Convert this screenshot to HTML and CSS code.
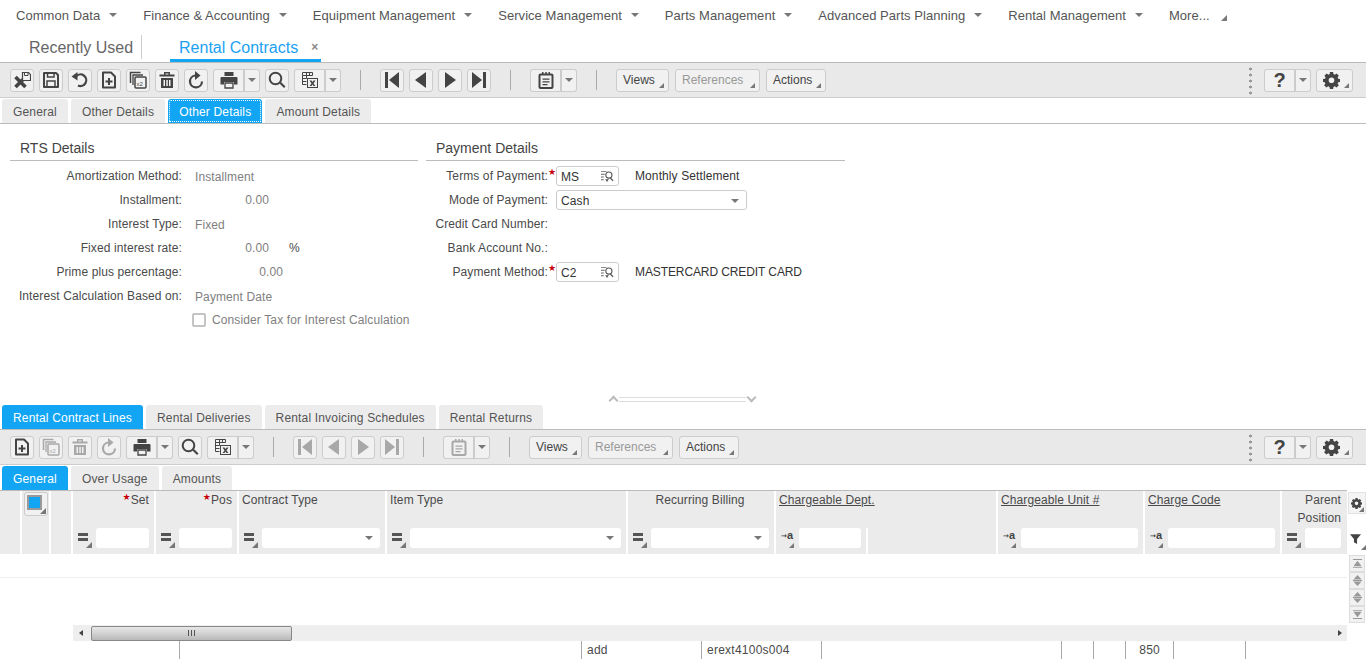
FILE: index.html
```html
<!DOCTYPE html>
<html lang="en">
<head>
    <meta charset="UTF-8">
    <meta name="viewport" content="width=device-width, initial-scale=1.0">
    <title>Rental Contracts</title>
    <link rel="stylesheet" href="styles.css">
</head>
<body>

    <!-- icon set, used by both toolbars -->
    <svg class="icon-defs" xmlns="http://www.w3.org/2000/svg">
        <symbol id="i-saveclose" viewBox="0 0 18 18">
            <path d="M2.500 6l10 10M12.500 6l-10 10" fill="none" stroke="currentColor" stroke-width="3.600"/>
            <path d="M9.500 1.500h6l2 2v6h-8z" fill="#f1f1f1" stroke="currentColor" stroke-width="1.200"/>
            <path d="M11.500 1.500h3.500v3h-3.500z" fill="none" stroke="currentColor"/>
        </symbol>
        <symbol id="i-save" viewBox="0 0 18 18">
            <path d="M2 2h12l2 2v12H2z" fill="none" stroke="currentColor" stroke-width="2" stroke-linejoin="round"/>
            <path d="M5.500 2v4h6.500V2M5 16v-6h8v6" fill="none" stroke="currentColor" stroke-width="1.500"/>
        </symbol>
        <symbol id="i-undo" viewBox="0 0 18 18">
            <path d="M5 5.500a5.800 5.800 0 1 1 2 9" fill="none" stroke="currentColor" stroke-width="2.200"/>
            <path d="M0.500 5.500l6-4.500v8.500z" fill="currentColor"/>
        </symbol>
        <symbol id="i-new" viewBox="0 0 18 18">
            <path d="M3 1.500h8l4 4v11H3z" fill="none" stroke="currentColor" stroke-width="2" stroke-linejoin="round"/>
            <path d="M8 7h2v2.500h2.500v2H10V14H8v-2.500H5.500v-2H8z" fill="currentColor"/>
        </symbol>
        <symbol id="i-copy" viewBox="0 0 18 18">
            <path d="M1.500 12V1.500h10" fill="none" stroke="currentColor" stroke-width="1.500"/>
            <path d="M4 14V4h10" fill="none" stroke="currentColor" stroke-width="1.300"/>
            <rect x="6" y="6" width="11" height="11" rx="1" fill="none" stroke="currentColor" stroke-width="1.500"/>
            <text x="7.600" y="14.500" class="icon-x2">x2</text>
        </symbol>
        <symbol id="i-delete" viewBox="0 0 18 18">
            <path d="M1.500 3.500h15v2h-15zM6 3.500V1h6v2.500h-1.500V2.500h-3v1z" fill="currentColor"/>
            <path d="M3 7h12v10H3zM5.500 9v6h1.500V9zM8.300 9v6h1.500V9zM11 9v6h1.500V9z" fill="currentColor" fill-rule="evenodd"/>
        </symbol>
        <symbol id="i-refresh" viewBox="0 0 18 18">
            <path d="M8 4.500a6 6 0 1 0 7 6" fill="none" stroke="currentColor" stroke-width="2.200"/>
            <path d="M8 0l5.500 4.500L8 9z" fill="currentColor"/>
        </symbol>
        <symbol id="i-print" viewBox="0 0 18 18">
            <path d="M4.500 1h9v4h-9zM1.500 6h15a1 1 0 0 1 1 1v6.500h-3.500V11H4v2.500H.5V7a1 1 0 0 1 1-1z" fill="currentColor"/>
            <path d="M5 12h8v5H5z" fill="#f1f1f1" stroke="currentColor" stroke-width="1.300"/>
        </symbol>
        <symbol id="i-search" viewBox="0 0 18 18">
            <circle cx="7.500" cy="7.500" r="5.800" fill="none" stroke="currentColor" stroke-width="2"/>
            <path d="M11.500 12.500l1.500-1.500 4.500 4.500-1.500 1.500z" fill="currentColor"/>
        </symbol>
        <symbol id="i-excel" viewBox="0 0 18 18">
            <path d="M1.500 1.500h10v3h-10zM1.500 4.500v9h4M1.500 7.500h4M1.500 10.500h4M5.500 1.500v6M8.500 1.500v3" fill="none" stroke="currentColor"/>
            <rect x="6.500" y="7.500" width="10" height="9" fill="#f1f1f1" stroke="currentColor"/>
            <path d="M8.500 9.500h2l1 1.500 1-1.500h2l-2 3 2 2.500h-2l-1-1.500-1 1.500h-2l2-2.500z" fill="currentColor"/>
        </symbol>
        <symbol id="i-first" viewBox="0 0 18 18"><path d="M2 1h3v16H2zM16 1v16L6 9z" fill="currentColor"/></symbol>
        <symbol id="i-prev" viewBox="0 0 18 18"><path d="M14 1v16L3 9z" fill="currentColor"/></symbol>
        <symbol id="i-next" viewBox="0 0 18 18"><path d="M4 1v16l11-8z" fill="currentColor"/></symbol>
        <symbol id="i-last" viewBox="0 0 18 18"><path d="M13 1h3v16h-3zM2 1v16l10-8z" fill="currentColor"/></symbol>
        <symbol id="i-note" viewBox="0 0 18 18">
            <path d="M3.500 3.500h11a1 1 0 0 1 1 1V16a1 1 0 0 1-1 1h-11a1 1 0 0 1-1-1V4.500a1 1 0 0 1 1-1z" fill="none" stroke="currentColor" stroke-width="2"/>
            <path d="M5 1h1.500v3H5zM8.300 1h1.500v3H8.300zM11.500 1H13v3h-1.500zM5.500 7.500h7v1.300h-7zM5.500 10.300h7v1.300h-7zM5.500 13h5v1.300h-5z" fill="currentColor"/>
        </symbol>
        <symbol id="i-gear" viewBox="0 0 18 18">
            <path fill="currentColor" fill-rule="evenodd" d="M7.300 1h3.400l.4 2.200 1.400.6L14.400 2.500l2.400 2.400-1.300 1.800.6 1.400 2.200.4v3l-2.200.4-.6 1.400 1.300 1.800-2.400 2.400-1.900-1.300-1.400.6-.4 2.100H7.300l-.4-2.100-1.400-.6-1.900 1.300-2.400-2.400 1.300-1.800-.6-1.400L0 11.500v-3l2.200-.4.6-1.400-1.300-1.800 2.400-2.400 1.900 1.300 1.400-.6zM9 6.700a3 3 0 1 0 0 6 3 3 0 0 0 0-6z" transform="translate(0 -1)"/>
        </symbol>
        <symbol id="i-lookup" viewBox="0 0 14 14">
            <path d="M0 1h6v1H0zM0 4h4v1H0zM0 7h3v1H0zM0 10h3v1H0z" fill="#666"/>
            <circle cx="8.500" cy="5.500" r="3.300" fill="none" stroke="#555" stroke-width="1.200"/>
            <path d="M10.500 8l3 3-1 1-3-3zM4.500 10h4l-2 3z" fill="#555"/>
        </symbol>
        <symbol id="i-filter" viewBox="0 0 14 14"><path d="M0 1h14L9 7v6.500L5 11V7z" fill="currentColor"/></symbol>
        <symbol id="i-top" viewBox="0 0 12 12"><path d="M1 1h10v1.200H1zM6 3l4.500 6h-9zM1 10h10v1H1z" fill="#999"/></symbol>
        <symbol id="i-up" viewBox="0 0 12 12"><path d="M6 0l4.500 5h-9zM1 5.500h10v1H1zM1.500 7h9L6 12z" fill="#999"/></symbol>
        <symbol id="i-bottom" viewBox="0 0 12 12"><path d="M1 1h10v1H1zM1.500 3h9L6 9zM1 9.800h10V11H1z" fill="#999"/></symbol>
    </svg>

    <div class="menubar">
        <a class="menu-item">Common Data<i class="caret"></i></a>
        <a class="menu-item">Finance &amp; Accounting<i class="caret"></i></a>
        <a class="menu-item">Equipment Management<i class="caret"></i></a>
        <a class="menu-item">Service Management<i class="caret"></i></a>
        <a class="menu-item">Parts Management<i class="caret"></i></a>
        <a class="menu-item">Advanced Parts Planning<i class="caret"></i></a>
        <a class="menu-item">Rental Management<i class="caret"></i></a>
        <a class="menu-item menu-more">More...<i class="corner"></i></a>
    </div>

    <div class="pagetabs">
        <a class="pagetab-recent">Recently Used</a>
        <a class="pagetab-current">Rental Contracts<span class="pagetab-close">×</span></a>
    </div>

    <div class="toolbar">
        <button class="tool"><svg><use href="#i-saveclose"/></svg></button>
        <button class="tool"><svg><use href="#i-save"/></svg></button>
        <button class="tool"><svg><use href="#i-undo"/></svg></button>
        <button class="tool"><svg><use href="#i-new"/></svg></button>
        <button class="tool"><svg><use href="#i-copy"/></svg></button>
        <button class="tool"><svg><use href="#i-delete"/></svg></button>
        <button class="tool"><svg><use href="#i-refresh"/></svg></button>
        <div class="split">
            <button class="tool"><svg><use href="#i-print"/></svg></button>
            <button class="tool-drop"><i class="caret"></i></button>
        </div>
        <button class="tool"><svg><use href="#i-search"/></svg></button>
        <div class="split">
            <button class="tool"><svg><use href="#i-excel"/></svg></button>
            <button class="tool-drop"><i class="caret"></i></button>
        </div>
        <span class="tool-sep"></span>
        <button class="tool"><svg><use href="#i-first"/></svg></button>
        <button class="tool"><svg><use href="#i-prev"/></svg></button>
        <button class="tool"><svg><use href="#i-next"/></svg></button>
        <button class="tool"><svg><use href="#i-last"/></svg></button>
        <span class="tool-sep"></span>
        <div class="split">
            <button class="tool"><svg><use href="#i-note"/></svg></button>
            <button class="tool-drop"><i class="caret"></i></button>
        </div>
        <span class="tool-sep"></span>
        <button class="tool-text views">Views<i class="corner"></i></button>
        <button class="tool-text refs off">References<i class="corner"></i></button>
        <button class="tool-text actions">Actions<i class="corner"></i></button>
        <div class="tool-right">
            <span class="grip"></span>
            <div class="split">
                <button class="tool tool-help">?</button>
                <button class="tool-drop"><i class="caret"></i></button>
            </div>
            <button class="tool tool-gear"><svg><use href="#i-gear"/></svg><i class="corner"></i></button>
        </div>
    </div>

    <div class="tabs tabs-line">
        <a class="tab">General</a>
        <a class="tab">Other Details</a>
        <a class="tab active focused">Other Details</a>
        <a class="tab">Amount Details</a>
    </div>

    <div class="form-area">
        <div class="form-cols">
            <div class="group group-rts">
                <h3>RTS Details</h3>
                <div class="row"><label>Amortization Method:</label><span class="val">Installment</span></div>
                <div class="row"><label>Installment:</label><span class="val num">0.00</span></div>
                <div class="row"><label>Interest Type:</label><span class="val">Fixed</span></div>
                <div class="row"><label>Fixed interest rate:</label><span class="val num">0.00</span><span class="unit">%</span></div>
                <div class="row"><label>Prime plus percentage:</label><span class="val num wide">0.00</span></div>
                <div class="row"><label>Interest Calculation Based on:</label><span class="val">Payment Date</span></div>
                <div class="row"><span class="check"></span><span class="check-label">Consider Tax for Interest Calculation</span></div>
            </div>
            <div class="group group-pay">
                <h3>Payment Details</h3>
                <div class="row">
                    <label>Terms of Payment:</label><b class="star">★</b>
                    <span class="field lookup">MS<svg><use href="#i-lookup"/></svg></span>
                    <span class="desc">Monthly Settlement</span>
                </div>
                <div class="row">
                    <label>Mode of Payment:</label><b class="star"></b>
                    <span class="field select">Cash<i class="caret"></i></span>
                </div>
                <div class="row"><label>Credit Card Number:</label></div>
                <div class="row"><label>Bank Account No.:</label></div>
                <div class="row">
                    <label>Payment Method:</label><b class="star">★</b>
                    <span class="field lookup">C2<svg><use href="#i-lookup"/></svg></span>
                    <span class="desc caps">MASTERCARD CREDIT CARD</span>
                </div>
            </div>
        </div>
        <div class="splitter"><i class="chev up"></i><span class="split-line"></span><i class="chev down"></i></div>
    </div>

    <div class="tabs">
        <a class="tab active">Rental Contract Lines</a>
        <a class="tab">Rental Deliveries</a>
        <a class="tab">Rental Invoicing Schedules</a>
        <a class="tab">Rental Returns</a>
    </div>

    <div class="toolbar">
        <button class="tool"><svg><use href="#i-new"/></svg></button>
        <button class="tool off"><svg><use href="#i-copy"/></svg></button>
        <button class="tool off"><svg><use href="#i-delete"/></svg></button>
        <button class="tool off"><svg><use href="#i-refresh"/></svg></button>
        <div class="split">
            <button class="tool"><svg><use href="#i-print"/></svg></button>
            <button class="tool-drop"><i class="caret"></i></button>
        </div>
        <button class="tool"><svg><use href="#i-search"/></svg></button>
        <div class="split">
            <button class="tool"><svg><use href="#i-excel"/></svg></button>
            <button class="tool-drop"><i class="caret"></i></button>
        </div>
        <span class="tool-sep"></span>
        <button class="tool off"><svg><use href="#i-first"/></svg></button>
        <button class="tool off"><svg><use href="#i-prev"/></svg></button>
        <button class="tool off"><svg><use href="#i-next"/></svg></button>
        <button class="tool off"><svg><use href="#i-last"/></svg></button>
        <span class="tool-sep"></span>
        <div class="split">
            <button class="tool off"><svg><use href="#i-note"/></svg></button>
            <button class="tool-drop"><i class="caret"></i></button>
        </div>
        <span class="tool-sep"></span>
        <button class="tool-text views">Views<i class="corner"></i></button>
        <button class="tool-text refs off">References<i class="corner"></i></button>
        <button class="tool-text actions">Actions<i class="corner"></i></button>
        <div class="tool-right">
            <span class="grip"></span>
            <div class="split">
                <button class="tool tool-help">?</button>
                <button class="tool-drop"><i class="caret"></i></button>
            </div>
            <button class="tool tool-gear"><svg><use href="#i-gear"/></svg><i class="corner"></i></button>
        </div>
    </div>

    <div class="tabs tabs-sub">
        <a class="tab active">General</a>
        <a class="tab">Over Usage</a>
        <a class="tab">Amounts</a>
    </div>

    <div class="grid-wrap">
        <div class="grid">
            <div class="grid-head">
                <div class="col"></div>
                <div class="col"><span class="select-all"><i></i><i class="corner"></i></span></div>
                <div class="col"></div>
                <div class="col">
                    <div class="hd right"><b class="star">★</b>Set</div>
                    <div class="flt"><span class="op op-eq"><i class="corner"></i></span><span class="flt-input"></span></div>
                </div>
                <div class="col">
                    <div class="hd right"><b class="star">★</b>Pos</div>
                    <div class="flt"><span class="op op-eq"><i class="corner"></i></span><span class="flt-input"></span></div>
                </div>
                <div class="col">
                    <div class="hd">Contract Type</div>
                    <div class="flt"><span class="op op-eq"><i class="corner"></i></span><span class="flt-input"><i class="caret"></i></span></div>
                </div>
                <div class="col">
                    <div class="hd">Item Type</div>
                    <div class="flt"><span class="op op-eq"><i class="corner"></i></span><span class="flt-input"><i class="caret"></i></span></div>
                </div>
                <div class="col">
                    <div class="hd center">Recurring Billing</div>
                    <div class="flt"><span class="op op-eq"><i class="corner"></i></span><span class="flt-input"><i class="caret"></i></span></div>
                </div>
                <div class="col">
                    <div class="hd"><u>Chargeable Dept.</u></div>
                    <div class="flt flt-short"><span class="op op-a"><b>→</b>a<i class="corner"></i></span><span class="flt-input"></span></div>
                </div>
                <div class="col">
                    <div class="hd"><u>Chargeable Unit #</u></div>
                    <div class="flt"><span class="op op-a"><b>→</b>a<i class="corner"></i></span><span class="flt-input"></span></div>
                </div>
                <div class="col">
                    <div class="hd"><u>Charge Code</u></div>
                    <div class="flt"><span class="op op-a"><b>→</b>a<i class="corner"></i></span><span class="flt-input"></span></div>
                </div>
                <div class="col">
                    <div class="hd right">Parent<br>Position</div>
                    <div class="flt"><span class="op op-eq"><i class="corner"></i></span><span class="flt-input"></span></div>
                </div>
            </div>
            <div class="grid-row"></div>
            <div class="grid-empty"></div>
            <div class="hscroll">
                <span class="hs-arrow left"></span>
                <span class="hs-thumb"><i></i></span>
                <span class="hs-arrow right"></span>
            </div>
        </div>
        <div class="grid-side">
            <button class="side-gear"><svg><use href="#i-gear"/></svg><i class="corner"></i></button>
            <span class="side-filter"><svg><use href="#i-filter"/></svg><i class="corner"></i></span>
            <div class="side-scroll">
                <button><svg><use href="#i-top"/></svg></button>
                <button><svg><use href="#i-up"/></svg></button>
                <button><svg><use href="#i-up"/></svg></button>
                <button><svg><use href="#i-bottom"/></svg></button>
            </div>
        </div>
    </div>

    <div class="behind-row">
        <div></div>
        <div class="cell"></div>
        <div class="cell">add</div>
        <div class="cell">erext4100s004</div>
        <div class="cell"></div>
        <div class="cell"></div>
        <div class="cell"></div>
        <div class="cell num">850</div>
        <div class="cell"></div>
        <div class="cell"></div>
    </div>

</body>
</html>
```

FILE: styles.css
```css
body {
    font-family: 'Liberation Sans', Arial, sans-serif;
    font-size: 12px;
    margin: 0;
    height: 659px;
    overflow: hidden;
    color: #4a4a4a;
    background-color: #fff;
}

.icon-defs {
    display: none;
}

.icon-x2 {
    font-family: 'Liberation Sans', Arial, sans-serif;
    font-size: 6px;
    fill: currentColor;
}

button {
    font-family: inherit;
    color: inherit;
    padding: 0;
}

/* small shapes used all over */
.caret {
    display: inline-block;
    width: 0;
    height: 0;
    border-left: 4px solid transparent;
    border-right: 4px solid transparent;
    border-top: 4px solid #777;
}

.corner {
    position: absolute;
    right: 1px;
    bottom: 1px;
    width: 0;
    height: 0;
    border-left: 6px solid transparent;
    border-bottom: 6px solid #777;
}

/* top menu */
.menubar {
    display: flex;
    height: 32px;
    padding-left: 16px;
    align-items: center;
    box-sizing: border-box;
    padding-bottom: 2px;
}

.menu-item {
    font-size: 13px;
    color: #555;
    margin-right: 26px;
    display: flex;
    align-items: center;
    white-space: nowrap;
    letter-spacing: 0.04px;
}

.menu-item .caret {
    margin-left: 9px;
}

.menu-more {
    position: relative;
    padding-right: 17px;
}

.menu-more .corner {
    right: 0;
    bottom: 2px;
}

/* page tabs */
.pagetabs {
    display: flex;
    height: 30px;
    padding-left: 29px;
    font-size: 16px;
}

.pagetab-recent {
    color: #666;
    height: 24px;
    margin-top: 3px;
    line-height: 26px;
    padding-right: 8px;
    border-right: 1px solid #ccc;
}

.pagetab-current {
    position: relative;
    color: #1ba1f2;
    margin-left: 28px;
    padding: 0 23px 0 9px;
    line-height: 32px;
    height: 27px;
    border-bottom: 3px solid #12a5f4;
}

.pagetab-close {
    position: absolute;
    top: -1px;
    right: 3px;
    font-size: 12px;
    font-weight: bold;
    color: #888;
}

/* toolbars */
.toolbar {
    display: flex;
    align-items: center;
    gap: 5px;
    height: 34px;
    padding: 0 13px 0 10px;
    background-color: #e9e9e9;
    border-top: 1px solid #bbb;
    border-bottom: 1px solid #ccc;
}

.tool {
    position: relative;
    display: flex;
    align-items: center;
    justify-content: center;
    width: 24px;
    height: 23px;
    background-color: #f1f1f1;
    border: 1px solid #ccc;
    border-radius: 3px;
    color: #444;
}

.tool svg {
    width: 18px;
    height: 18px;
}

.tool.off {
    color: #a8a8a8;
}

.split {
    display: flex;
}

.split .tool {
    width: 32px;
    border-radius: 3px 0 0 3px;
    border-right: 2px solid #ccc;
}

.tool-drop {
    display: flex;
    align-items: center;
    justify-content: center;
    width: 15px;
    height: 23px;
    background-color: #f1f1f1;
    border: 1px solid #ccc;
    border-left: 0;
    border-radius: 0 3px 3px 0;
}

.tool-sep {
    width: 1px;
    height: 20px;
    margin: 0 14px;
    background-color: #aaa;
}

.tool-text {
    position: relative;
    height: 23px;
    padding: 0 0 0 6px;
    background-color: #f1f1f1;
    border: 1px solid #ccc;
    border-radius: 3px;
    font-size: 12px;
    color: #444;
    text-align: left;
}

.tool-text + .tool-text {
    margin-left: 1px;
}

.tool-text.views {
    width: 53px;
}

.tool-text.refs {
    width: 85px;
}

.tool-text.actions {
    width: 60px;
}

.tool-text.off {
    color: #999;
}

.tool-text .corner {
    right: 4px;
    bottom: 3px;
    border-left-width: 5px;
    border-bottom-width: 5px;
}

.tool-right {
    display: flex;
    align-items: center;
    gap: 5px;
    margin-left: auto;
}

.grip {
    width: 3px;
    height: 29px;
    margin-right: 7px;
    background-image: radial-gradient(circle at center, #999 1.4px, transparent 1.6px);
    background-size: 3px 6px;
}

.tool-help {
    font-size: 20px;
    font-weight: bold;
    color: #444;
}

.tool-gear {
    width: 37px;
    justify-content: flex-start;
    padding-left: 6px;
    box-sizing: border-box;
}

.tool-gear svg {
    width: 17px;
    height: 17px;
}

.tool-gear .corner {
    right: 3px;
    bottom: 3px;
    border-left-width: 5px;
    border-bottom-width: 5px;
}

/* tabs */
.tabs {
    display: flex;
    gap: 3px;
    padding-left: 2px;
    height: 24px;
}

.tabs-line {
    margin-top: 1px;
    border-bottom: 1px solid #bbb;
}

.tabs-sub {
    margin-top: 1px;
}

.tab {
    display: flex;
    align-items: center;
    padding: 1px 11px 0;
    background-color: #ececec;
    border-radius: 3px 3px 0 0;
    color: #555;
    letter-spacing: 0.17px;
    white-space: nowrap;
}

.tab.active {
    background-color: #12a5f4;
    color: #fff;
}

.tab.focused {
    outline: 1px dotted #fff;
    outline-offset: -2px;
}

/* form part */
.form-area {
    display: flex;
    flex-direction: column;
    height: 281px;
    letter-spacing: 0.1px;
}

.form-cols {
    display: flex;
    gap: 8px;
    padding: 15px 0 0 10px;
}

.group h3 {
    font-size: 14px;
    font-weight: normal;
    margin: 0 0 3px;
    height: 21px;
    line-height: 18px;
    padding-left: 10px;
    color: #444;
    border-bottom: 1px solid #bbb;
    letter-spacing: 0;
}

.group-rts {
    width: 408px;
}

.group-pay {
    width: 419px;
}

.row {
    display: flex;
    align-items: center;
    height: 24px;
}

.row label {
    text-align: right;
    white-space: nowrap;
}

.group-rts label {
    width: 172px;
    margin-right: 13px;
}

.group-pay label {
    width: 122px;
}

.val {
    color: #808080;
    white-space: nowrap;
    margin-top: 2px;
}

.val.num {
    width: 74px;
    margin-top: 0;
    text-align: right;
}

.val.num.wide {
    width: 88px;
}

.unit {
    margin-left: 20px;
}

.check {
    width: 14px;
    height: 14px;
    margin-left: 182px;
    border: 2px solid #c4c4c4;
    border-radius: 2px;
    box-sizing: border-box;
}

.check-label {
    margin-left: 6px;
    color: #808080;
    white-space: nowrap;
    letter-spacing: 0.12px;
}

.star {
    display: inline-block;
    color: #c8000a;
    font-family: 'DejaVu Sans', sans-serif;
    font-size: 9px;
    font-weight: normal;
    line-height: 8px;
    vertical-align: 4px;
}

.group-pay .star {
    width: 8px;
    height: 16px;
    line-height: 12px;
    align-self: flex-start;
    margin-top: 2px;
    letter-spacing: 0;
}

.field {
    position: relative;
    display: flex;
    align-items: center;
    height: 20px;
    padding: 1px 0 0 4px;
    box-sizing: border-box;
    border: 1px solid #ccc;
    border-radius: 3px;
    color: #333;
}

.lookup {
    width: 63px;
}

.lookup svg {
    position: absolute;
    right: 4px;
    top: 3px;
    width: 13px;
    height: 13px;
}

.select {
    width: 191px;
}

.select .caret {
    position: absolute;
    right: 7px;
    top: 8px;
}

.desc {
    margin-left: 16px;
    color: #333;
    white-space: nowrap;
}

.desc.caps {
    letter-spacing: -0.1px;
}

.splitter {
    display: flex;
    align-items: center;
    width: 145px;
    margin: auto 0 2px 610px;
    height: 8px;
}

.split-line {
    flex: 1;
    height: 3px;
    margin: 0 2px;
    border-top: 1px solid #ddd;
    border-bottom: 1px solid #ddd;
}

.chev {
    width: 5px;
    height: 5px;
    border-left: 2px solid #bbb;
    border-top: 2px solid #bbb;
}

.chev.up {
    transform: rotate(45deg);
    margin-top: 3px;
}

.chev.down {
    transform: rotate(225deg);
    margin-bottom: 3px;
}

/* grid */
.grid-wrap {
    display: flex;
    height: 151px;
}

.grid {
    width: 1347px;
}

.grid-head {
    display: grid;
    grid-template-columns: 22px 29px 22px 83px 83px 148px 241px 148px 222px 147px 137px 65px;
    height: 63px;
    background-color: #ebebeb;
    border-top: 1px solid #bbb;
}

.col {
    display: flex;
    flex-direction: column;
    position: relative;
    border-right: 2px solid #fff;
    box-sizing: border-box;
    min-width: 0;
}

.col:last-child {
    border-right: 0;
}

.hd {
    flex: 1;
    padding: 0 5px 0 3px;
    line-height: 18px;
    white-space: nowrap;
    letter-spacing: 0.1px;
}

.hd.right {
    text-align: right;
}

.hd.center {
    text-align: center;
}

.hd u {
    text-underline-offset: 1px;
}

.flt {
    display: flex;
    align-items: center;
    gap: 4px;
    height: 20px;
    padding: 0 5px;
    margin-bottom: 6px;
}

.col:last-child .flt {
    padding-right: 6px;
}

.col:last-child .hd {
    padding-right: 6px;
}

.flt-short {
    width: 92px;
    height: 26px;
    margin-bottom: 0;
    padding-bottom: 6px;
    box-sizing: border-box;
    border-right: 2px solid #fff;
}

.flt-input {
    position: relative;
    flex: 1;
    min-width: 0;
    height: 20px;
    background-color: #fff;
    border-radius: 3px;
}

.flt-input .caret {
    position: absolute;
    right: 7px;
    top: 8px;
}

.op {
    position: relative;
    flex: none;
    width: 14px;
    height: 20px;
    box-sizing: border-box;
}

.op .corner {
    right: 0;
    bottom: 0;
    border-left-width: 6px;
    border-bottom-width: 6px;
}

.op-eq::before {
    content: "";
    position: absolute;
    left: 0;
    top: 5px;
    width: 10px;
    height: 3px;
    background-color: #555;
    box-shadow: 0 5px 0 #555;
}

.op-a {
    font-size: 11px;
    font-weight: bold;
    line-height: 15px;
    white-space: nowrap;
    color: #444;
}

.op-a b {
    font-family: 'DejaVu Sans', sans-serif;
    font-size: 7px;
    vertical-align: 1px;
}

.op-a .corner {
    right: 1px;
    bottom: 0;
    border-left-width: 5px;
    border-bottom-width: 5px;
}

.select-all {
    position: relative;
    display: block;
    width: 24px;
    height: 24px;
    box-sizing: border-box;
    background-color: #f1f1f1;
    border: 1px solid #ccc;
    border-radius: 3px;
    margin: 1px 0 0 2px;
}

.select-all i:first-child {
    display: block;
    width: 15px;
    height: 15px;
    margin: 2px 0 0 2px;
    background-color: #12a5f4;
    border: 2px solid #999;
    box-sizing: border-box;
}

.grid-row {
    height: 23px;
    border-bottom: 1px solid #eee;
}

.grid-empty {
    height: 47px;
}

.hscroll {
    display: flex;
    align-items: center;
    height: 16px;
    margin-left: 73px;
    background-color: #eee;
    position: relative;
}

.hs-arrow {
    width: 0;
    height: 0;
    border-top: 3px solid transparent;
    border-bottom: 3px solid transparent;
}

.hs-arrow.left {
    margin-left: 6px;
    border-right: 4px solid #444;
}

.hs-arrow.right {
    margin-left: auto;
    margin-right: 5px;
    border-left: 4px solid #444;
}

.hs-thumb {
    display: flex;
    align-items: center;
    justify-content: center;
    width: 201px;
    height: 15px;
    margin-left: 8px;
    box-sizing: border-box;
    border: 1px solid #888;
    border-radius: 2px;
    background: linear-gradient(#e6e6e6, #d2d2d2 50%, #b8b8b8);
}

.hs-thumb i {
    width: 7px;
    height: 6px;
    background-image: repeating-linear-gradient(90deg, #555 0 1px, transparent 1px 3px);
}

.grid-side {
    display: flex;
    flex-direction: column;
    width: 19px;
}

.side-gear {
    position: relative;
    width: 18px;
    height: 22px;
    margin: 2px 0 0 1px;
    background-color: #f4f4f4;
    border: 1px solid #e3e3e3;
    color: #444;
}

.side-gear svg {
    display: block;
    width: 11px;
    height: 11px;
    margin: 1px 0 0 2px;
}

.side-gear .corner {
    right: 1px;
    bottom: 1px;
    border-left-width: 5px;
    border-bottom-width: 5px;
}

.side-filter {
    position: relative;
    display: block;
    height: 22px;
    margin-top: 19px;
    color: #444;
}

.side-filter svg {
    display: block;
    width: 11px;
    height: 12px;
    margin-left: 3px;
}

.side-filter .corner {
    right: 0;
    bottom: 5px;
    border-left-width: 5px;
    border-bottom-width: 5px;
}

.side-scroll {
    display: flex;
    flex-direction: column;
}

.side-scroll button {
    display: flex;
    align-items: center;
    justify-content: center;
    width: 16px;
    height: 17px;
    margin-left: 2px;
    background-color: #f1f1f1;
    border: 1px solid #ddd;
}

.side-scroll svg {
    width: 11px;
    height: 11px;
}

/* row sticking out from under the window */
.behind-row {
    display: grid;
    grid-template-columns: 179px 402px 120px 120px 240px 32px 32px 48px 72px 1fr;
    height: 18px;
    line-height: 18px;
    letter-spacing: 0.25px;
}

.cell {
    border-left: 1px solid #aaa;
    padding-left: 5px;
    white-space: nowrap;
}

.cell.num {
    padding: 0 13px 0 0;
    text-align: right;
}
```
